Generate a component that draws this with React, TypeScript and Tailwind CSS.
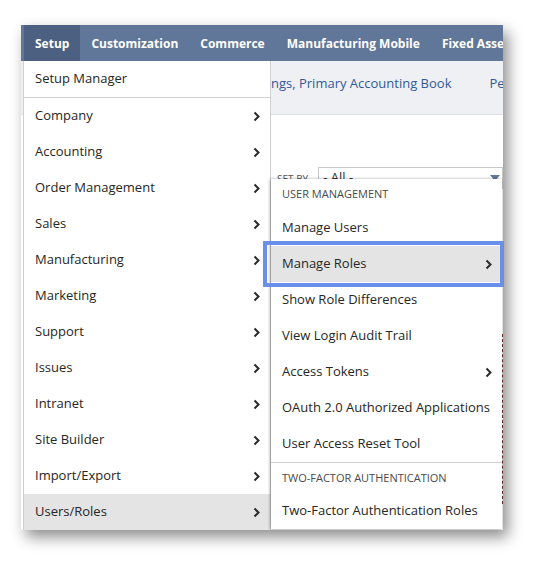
const mainItems = [
  "Company",
  "Accounting",
  "Order Management",
  "Sales",
  "Manufacturing",
  "Marketing",
  "Support",
  "Issues",
  "Intranet",
  "Site Builder",
  "Import/Export",
  "Users/Roles",
];

const navItems = ["Setup", "Customization", "Commerce", "Manufacturing Mobile", "Fixed Assets"];

function Chevron({ className = "" }: { className?: string }) {
  return (
    <svg width="7" height="11" viewBox="0 0 7 11" className={className}>
      <path d="M1.5 1.5 L5.5 5.5 L1.5 9.5" fill="none" stroke="#2b2b2b" strokeWidth="2" />
    </svg>
  );
}

function MenuRow({ label, arrow, active }: { label: string; arrow?: boolean; active?: boolean }) {
  return (
    <div
      className={`flex h-[36px] items-center justify-between pl-[11px] pr-[10px] text-[13px] text-[#262626] ${
        active ? "bg-[#e4e4e4]" : ""
      }`}
    >
      <span>{label}</span>
      {arrow && <Chevron />}
    </div>
  );
}

function SectionHeader({ label }: { label: string }) {
  return (
    <div className="flex h-[30px] items-center pl-[11px] text-[11px] uppercase text-[#4a4a4a]">{label}</div>
  );
}

export default function App() {
  return (
    <div className="relative h-[573px] w-[547px] bg-white pl-[21px] pt-[25px] font-['Open_Sans','Liberation_Sans',sans-serif]">
      <div className="relative h-[505px] w-[482px] overflow-hidden bg-white shadow-[5px_7px_14px_rgba(0,0,0,0.45)]">
        {/* top nav */}
        <div className="flex h-[36px] items-stretch whitespace-nowrap bg-[#607799] pl-[3px] text-[12px] font-bold text-white">
          {navItems.map((item, i) => (
            <div key={item} className={`flex items-center px-[11px] pt-px ${i === 0 ? "bg-[#4c6182]" : ""}`}>
              {item}
            </div>
          ))}
        </div>

        {/* secondary bar */}
        <div className="flex h-[54px] items-start whitespace-nowrap border-b border-[#dcdfe5] bg-[#eef0f4] pl-[250px] pt-[13px] text-[13px] text-[#34599a]">
          <span>ngs, Primary Accounting Book</span>
          <svg width="10" height="6" viewBox="0 0 10 6" className="ml-[7px] mt-[8px]">
            <path d="M0 0 H10 L5 6 Z" fill="#34599a" />
          </svg>
          <span className="ml-[31px]">Period</span>
        </div>

        {/* page content behind menus */}
        <div className="relative h-[414px]">
          <div className="flex items-start gap-[10px] pl-[256px] pt-[52px]">
            <span className="mt-[5px] text-[10px] uppercase text-[#555]">Set By</span>
            <div className="flex h-[22px] flex-1 items-center justify-between border border-[#c8c8c8] pl-[4px] pr-[2px] text-[13px] text-[#333]">
              <span>- All -</span>
              <svg width="10" height="6" viewBox="0 0 10 6">
                <path d="M0 0 H10 L5 6 Z" fill="#607799" />
              </svg>
            </div>
          </div>
          <div className="absolute right-0 top-[219px] h-[170px] border-r border-dashed border-[#7a2a2a]" />
        </div>

        {/* main Setup menu */}
        <div className="absolute left-[2px] top-[36px] w-[248px] border-l border-r border-[#cfcfcf] bg-white">
          <MenuRow label="Setup Manager" />
          <div className="h-px bg-[#d0d0d0]" />
          {mainItems.map((item) => (
            <MenuRow key={item} label={item} arrow active={item === "Users/Roles"} />
          ))}
        </div>

        {/* Users/Roles submenu */}
        <div className="absolute left-[250px] top-[154px] w-[231px] bg-white shadow-[-1px_0_3px_rgba(0,0,0,0.25),0_1px_3px_rgba(0,0,0,0.2)]">
          <SectionHeader label="User Management" />
          <div className="pt-px">
            <MenuRow label="Manage Users" />
          </div>
          <MenuRow label="Manage Roles" arrow active />
          <MenuRow label="Show Role Differences" />
          <MenuRow label="View Login Audit Trail" />
          <MenuRow label="Access Tokens" arrow />
          <MenuRow label="OAuth 2.0 Authorized Applications" />
          <MenuRow label="User Access Reset Tool" />
          <div className="h-px bg-[#d0d0d0]" />
          <SectionHeader label="Two-Factor Authentication" />
          <MenuRow label="Two-Factor Authentication Roles" />
        </div>
      </div>

      {/* highlight annotation */}
      <div className="absolute left-[263px] top-[241px] h-[46px] w-[241px] border-[4px] border-[#6a8fe8]" />
    </div>
  );
}
